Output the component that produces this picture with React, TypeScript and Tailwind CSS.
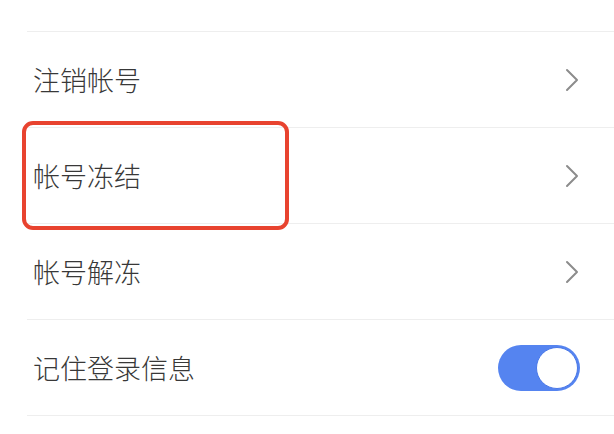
import React from "react";

function Chevron() {
  return (
    <svg width="14" height="24" viewBox="0 0 14 24" className="shrink-0">
      <polyline points="2,2 12,12 2,22" fill="none" stroke="#8c8c8c" strokeWidth="2" strokeLinecap="round" strokeLinejoin="round" />
    </svg>
  );
}

function Row({ label, right }: { label: string; right: React.ReactNode }) {
  return (
    <div className="h-[96px] border-t border-[#eeeeee] ml-[27px] flex items-center justify-between pl-[6px]">
      <span className="text-[27px] text-[#383838] font-light leading-none">{label}</span>
      {right}
    </div>
  );
}

export default function App() {
  return (
    <div
      className="relative w-[614px] h-[434px] bg-white overflow-hidden"
      style={{ fontFamily: '"Noto Sans CJK SC", "Noto Sans", sans-serif' }}
    >
      <div className="h-[31px]" />
      <Row label="注销帐号" right={<div className="mr-[35px]"><Chevron /></div>} />
      <Row label="帐号冻结" right={<div className="mr-[35px]"><Chevron /></div>} />
      <Row label="帐号解冻" right={<div className="mr-[35px]"><Chevron /></div>} />
      <Row
        label="记住登录信息"
        right={
          <div className="mr-[34px] w-[82px] h-[46px] rounded-full bg-[#5584f0] flex items-center justify-end pr-[2px]">
            <div className="w-[42px] h-[42px] rounded-full bg-white border border-[#4a78e8]" />
          </div>
        }
      />
      <div className="border-t border-[#eeeeee] ml-[27px]" />
      <div className="absolute left-[22px] top-[121px] w-[267px] h-[109px] border-[4px] border-[#e8432f] rounded-[11px]" />
    </div>
  );
}
